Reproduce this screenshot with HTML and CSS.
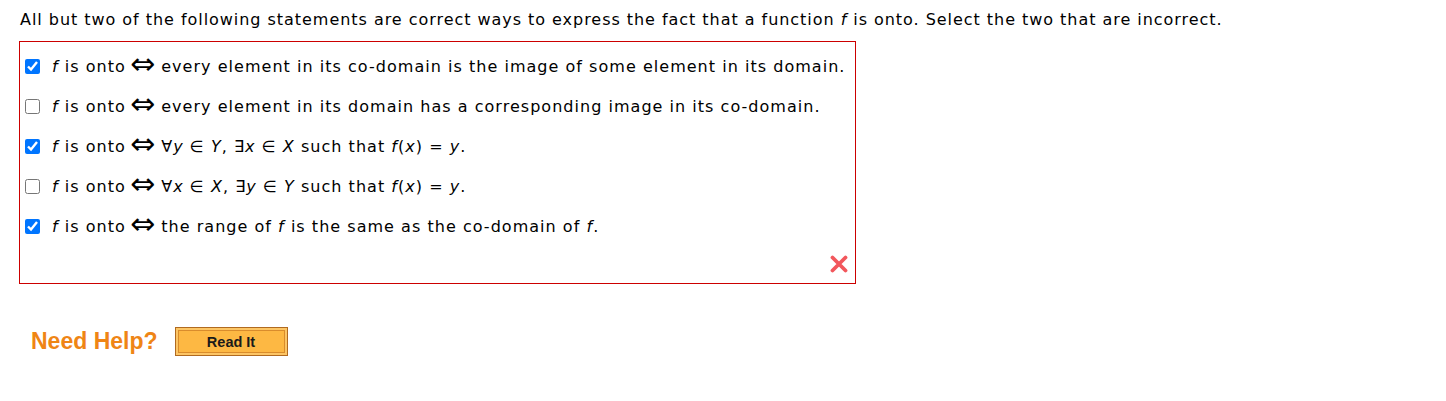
FILE: index.html
```html
<!DOCTYPE html>
<html>
<head>
<meta charset="utf-8">
<link rel="stylesheet" href="styles.css">
</head>
<body>
<div class="page">
  <p class="prompt">All but two of the following statements are correct ways to express the fact that a function <i>f</i> is onto. Select the two that are incorrect.</p>
  <div class="answers">
    <label class="row"><input type="checkbox" checked><span><i>f</i> is onto <span class="iff">⇔</span> every element in its co-domain is the image of some element in its domain.</span></label>
    <label class="row"><input type="checkbox"><span><i>f</i> is onto <span class="iff">⇔</span> every element in its domain has a corresponding image in its co-domain.</span></label>
    <label class="row"><input type="checkbox" checked><span><i>f</i> is onto <span class="iff">⇔</span> ∀<i>y</i> ∈ <i>Y</i>, ∃<i>x</i> ∈ <i>X</i> such that <i>f</i>(<i>x</i>) = <i>y</i>.</span></label>
    <label class="row"><input type="checkbox"><span><i>f</i> is onto <span class="iff">⇔</span> ∀<i>x</i> ∈ <i>X</i>, ∃<i>y</i> ∈ <i>Y</i> such that <i>f</i>(<i>x</i>) = <i>y</i>.</span></label>
    <label class="row"><input type="checkbox" checked><span><i>f</i> is onto <span class="iff">⇔</span> the range of <i>f</i> is the same as the co-domain of <i>f</i>.</span></label>
    <div class="mark">
      <svg width="20" height="18" viewBox="0 0 20 18"><path d="M3.5 2.5 L16.5 15.5 M16.5 2.5 L3.5 15.5" stroke="#f2575c" stroke-width="3.8" stroke-linecap="round"/></svg>
    </div>
  </div>
  <div class="help">
    <span class="need">Need Help?</span>
    <button class="read">Read It</button>
  </div>
</div>
</body>
</html>
```
FILE: styles.css
```css
html, body { margin: 0; padding: 0; background: #fff; }
.page {
  padding: 8px 0 0 19px;
  font-family: "DejaVu Sans", Verdana, sans-serif;
  font-size: 16px;
  color: #000;
}
.prompt {
  margin: 0 0 0 1px;
  height: 25px;
  line-height: 24px;
  letter-spacing: 0.96px;
}
.answers {
  width: 837px;
  height: 243px;
  border-width: 1px;
  border-style: solid;
  border-color: #cc0000;
  padding-top: 4px;
  box-sizing: border-box;
  display: flex;
  flex-direction: column;
  margin-top: 8px;
}
.row {
  height: 40px;
  display: flex;
  align-items: center;
  letter-spacing: 1.03px;
}
.row input {
  width: 15px;
  height: 15px;
  margin: 0 12px 0 5px;
  accent-color: #0075ff;
}
.iff {
  font-family: "DejaVu Sans", sans-serif;
  font-size: 30px;
  line-height: 0;
  letter-spacing: 0;
  vertical-align: -2px;
  margin-left: -2px;
}
.mark {
  flex: 1;
  display: flex;
  justify-content: flex-end;
  align-items: center;
  padding-right: 6px;
  padding-bottom: 2px;
}
.help {
  display: flex;
  align-items: center;
  margin-top: 43px;
  padding-left: 12px;
}
.need {
  font-family: "Liberation Sans", Arial, sans-serif;
  font-weight: bold;
  font-size: 23px;
  color: #ef8515;
  margin-right: 17px;
}
.read {
  width: 113px;
  height: 29px;
  border: 1px solid #b06a20;
  background: #fdb843;
  box-shadow: inset 0 0 0 2px #fcc565, inset 0 0 0 3px #d98c2c;
  font-family: "Liberation Sans", Arial, sans-serif;
  font-weight: bold;
  font-size: 14.5px;
  color: #1a1a1a;
  padding: 0;
}
```
